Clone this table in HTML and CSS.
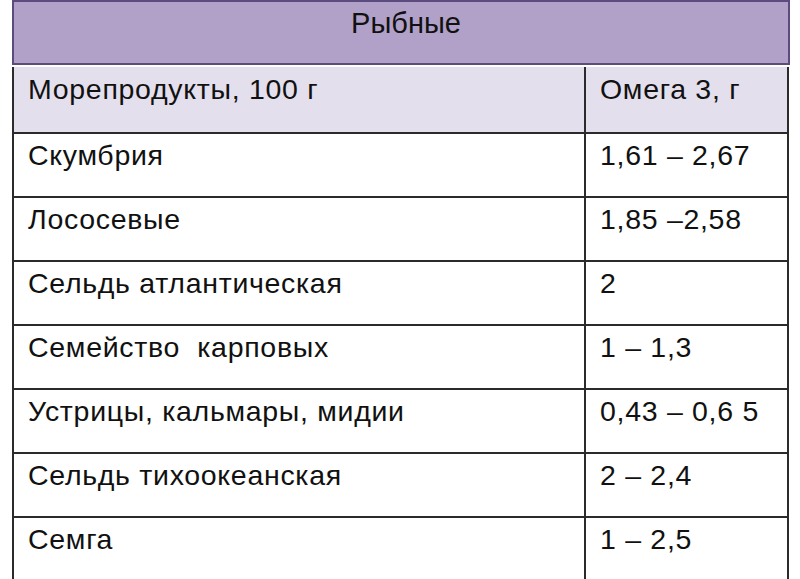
FILE: index.html
```html
<!DOCTYPE html>
<html lang="ru">
<head>
<meta charset="utf-8">
<link rel="stylesheet" href="styles.css">
</head>
<body>
<div class="sheet">
  <div class="title">Рыбные</div>
  <table class="grid">
    <tr class="head"><td class="c1">Морепродукты, 100 г</td><td class="c2">Омега 3, г</td></tr>
    <tr><td class="c1">Скумбрия</td><td class="c2">1,61 – 2,67</td></tr>
    <tr><td class="c1">Лососевые</td><td class="c2">1,85 –2,58</td></tr>
    <tr><td class="c1">Сельдь атлантическая</td><td class="c2">2</td></tr>
    <tr><td class="c1">Семейство&nbsp; карповых</td><td class="c2">1 – 1,3</td></tr>
    <tr><td class="c1">Устрицы, кальмары, мидии</td><td class="c2">0,43 – 0,6 5</td></tr>
    <tr><td class="c1">Сельдь тихоокеанская</td><td class="c2">2 – 2,4</td></tr>
    <tr><td class="c1">Семга</td><td class="c2">1 – 2,5</td></tr>
  </table>
</div>
</body>
</html>
```
FILE: styles.css
```css
html, body {
  margin: 0;
  background: #ffffff;
}
.sheet {
  padding-left: 12px;
  width: 778px;
  font-family: "Liberation Sans", Arial, sans-serif;
  color: #111;
}
.title {
  box-sizing: border-box;
  height: 65px;
  background: #b1a1c8;
  border: 2px solid #5c4b7e;
  text-align: center;
  font-size: 29px;
  padding-top: 5px;
  padding-left: 10px;
  margin-bottom: 2px;
}
.grid {
  width: 777px;
  border-collapse: collapse;
  table-layout: fixed;
}
.grid td {
  border: 2px solid #2b2b2b;
  height: 64px;
  vertical-align: top;
  font-size: 28.5px;
  letter-spacing: 0.7px;
  padding: 5px 0 0 14px;
  box-sizing: border-box;
  white-space: nowrap;
}
.grid .c1 { width: 572px; }
.grid .head td {
  background: #e4dfec;
  border-top: none;
  height: 66px;
  padding-top: 6px;
}
```
